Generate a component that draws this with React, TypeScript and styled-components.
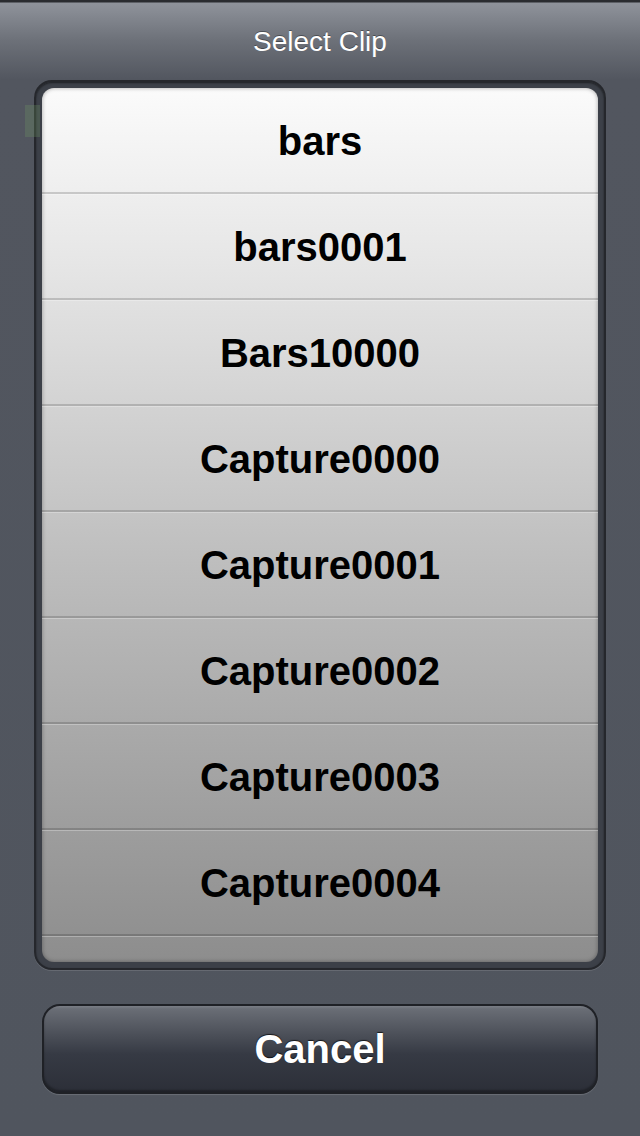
import React from "react";
import styled, { createGlobalStyle } from "styled-components";

const Global = createGlobalStyle`
  html, body { margin: 0; padding: 0; }
  body { background: #50555e; font-family: "Liberation Sans", Arial, sans-serif; }
`;

const Page = styled.div`
  position: relative;
  width: 640px;
  height: 1136px;
  overflow: hidden;
  display: flex;
  flex-direction: column;
  padding: 0 34px;
  box-sizing: border-box;
  background: linear-gradient(
    to bottom,
    #2a2c30 0px,
    #2a2c30 2px,
    #8f939b 3px,
    #6d7179 40px,
    #52565f 80px,
    #50555e 100%
  );
`;

const Header = styled.div`
  height: 80px;
  display: flex;
  align-items: center;
  justify-content: center;
  color: #ffffff;
  font-size: 28px;
  padding-top: 4px;
  box-sizing: border-box;
  text-shadow: 0 -1px 0 rgba(0, 0, 0, 0.35);
`;

const Frame = styled.div`
  height: 890px;
  box-sizing: border-box;
  border: 2px solid #25272c;
  border-radius: 18px;
  padding: 6px;
  background: #3c4048;
  box-shadow: 0 1px 0 rgba(255, 255, 255, 0.12), inset 0 1px 2px rgba(0, 0, 0, 0.5);
`;

const List = styled.div`
  height: 100%;
  border-radius: 12px;
  overflow: hidden;
  background: linear-gradient(to bottom, #fbfbfb 0%, #e6e6e6 20%, #bdbdbd 55%, #8d8d8d 100%);
  box-shadow: inset 0 0 4px rgba(0, 0, 0, 0.35);
`;

const Row = styled.div`
  height: 102px;
  display: flex;
  align-items: center;
  justify-content: center;
  font-size: 40px;
  font-weight: bold;
  color: #000;
  border-bottom: 2px solid rgba(0, 0, 0, 0.16);
  box-shadow: 0 1px 0 rgba(255, 255, 255, 0.28);
  padding-top: 2px;
  box-sizing: content-box;
`;

const Artifact = styled.div`
  position: absolute;
  left: 25px;
  top: 105px;
  width: 15px;
  height: 32px;
  background: rgba(110, 150, 100, 0.28);
`;

const CancelButton = styled.button`
  margin: 34px 8px 0;
  height: 90px;
  border-radius: 18px;
  border: 2px solid #1f2126;
  background: linear-gradient(
    to bottom,
    #7a7e86 0px,
    #696d75 3px,
    #4a4e57 30px,
    #363a44 48px,
    #2c2f38 100%
  );
  box-shadow: 0 1px 1px rgba(255, 255, 255, 0.15), inset 0 -2px 2px rgba(0, 0, 0, 0.3);
  color: #fff;
  font-family: "Liberation Sans", Arial, sans-serif;
  font-weight: bold;
  font-size: 40px;
  text-shadow: 0 -1px 1px rgba(0, 0, 0, 0.7);
  display: flex;
  align-items: center;
  justify-content: center;
  padding: 0;
  cursor: pointer;
`;

const clips = [
  "bars",
  "bars0001",
  "Bars10000",
  "Capture0000",
  "Capture0001",
  "Capture0002",
  "Capture0003",
  "Capture0004",
];

export default function App() {
  return (
    <>
      <Global />
      <Page>
        <Header>Select Clip</Header>
        <Frame>
          <List>
            {clips.map((c) => (
              <Row key={c}>{c}</Row>
            ))}
          </List>
        </Frame>
        <CancelButton>Cancel</CancelButton>
        <Artifact />
      </Page>
    </>
  );
}
